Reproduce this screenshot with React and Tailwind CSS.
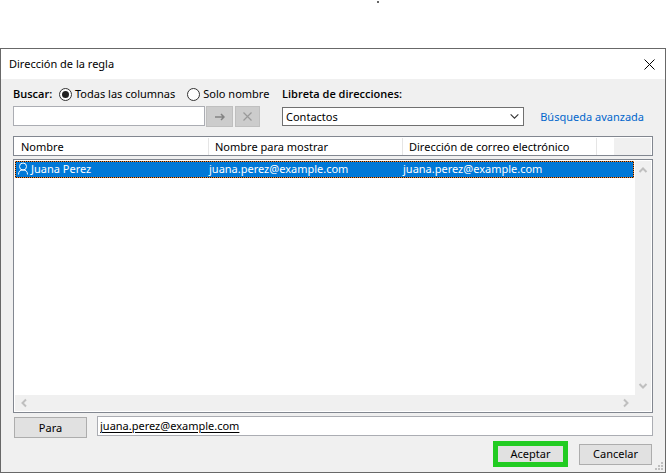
import React from "react";

const contacts = [
  { name: "Juana Perez", display: "juana.perez@example.com", email: "juana.perez@example.com" },
];

function Chevron({ className }) {
  return (
    <svg viewBox="0 0 10 10" className={className} fill="none" stroke="currentColor" aria-hidden="true">
      <path d="M1.500 7 5 3.500 8.500 7" />
    </svg>
  );
}

function PersonIcon() {
  return (
    <svg viewBox="0 0 12 13" className="h-[13px] w-3 shrink-0" fill="none" stroke="currentColor" aria-hidden="true">
      <circle cx="6" cy="4.500" r="3.500" />
      <path d="M1.500 12.500C1.500 9.500 3 8 6 8s4.500 1.500 4.500 4.500" />
    </svg>
  );
}

function Radio({ id, label, defaultChecked }) {
  return (
    <label htmlFor={id} className="flex items-center gap-[3px] whitespace-nowrap">
      <input
        id={id}
        type="radio"
        name="scope"
        defaultChecked={defaultChecked}
        className="grid size-[13px] appearance-none place-items-center rounded-full border border-[#333] bg-white before:size-[7px] before:rounded-full checked:before:bg-[#222]"
      />
      {label}
    </label>
  );
}

function ContactTable() {
  const cols = "grid grid-cols-[195px_194px_194px_1fr]";
  return (
    <div className="relative mt-[9px] flex flex-1 flex-col">
      <table className="flex flex-1 flex-col gap-[3px] text-left">
        <thead className="block h-5 border border-[#828790] bg-white">
          <tr className={cols + " h-full py-px"}>
            <th className="flex items-center border-r border-[#e5e5e5] pt-px pl-[7px] font-normal">Nombre</th>
            <th className="flex items-center border-r border-[#e5e5e5] pt-px pl-[6px] font-normal">Nombre para mostrar</th>
            <th className="flex items-center border-r border-[#e5e5e5] pt-px pl-[6px] font-normal whitespace-nowrap">
              Dirección de correo electrónico
            </th>
            <td className="mr-px ml-[17px] bg-[#f0f0f0]" />
          </tr>
        </thead>
        <tbody className="block flex-1 border border-[#828790] bg-white p-px">
          {contacts.map((c) => (
            <tr
              key={c.email}
              aria-selected="true"
              className={cols + " mr-[17px] h-[17px] items-center border border-dotted border-[#ff8728] bg-[#10181f] leading-[15px] text-white"}
            >
              <td className="flex h-[15px] items-center gap-[2px] bg-[#0078d7] pb-[2px] pl-px">
                <PersonIcon />
                {c.name}
              </td>
              <td className="-ml-[2px] h-[15px] bg-[#0078d7] leading-[13px]">{c.display}</td>
              <td className="-ml-[2px] h-[15px] bg-[#0078d7] leading-[13px]">{c.email}</td>
              <td className="h-[15px] bg-[#0078d7]" />
            </tr>
          ))}
        </tbody>
      </table>
      <div className="absolute top-[25px] right-[2px] bottom-[2px] flex w-4 flex-col items-center justify-between bg-[#f0f0f0] pt-1 pb-5 text-[#bfbfbf]">
        <Chevron className="size-[10px] stroke-2" />
        <Chevron className="size-[10px] rotate-180 stroke-2" />
      </div>
      <div className="absolute right-[18px] bottom-[2px] left-[2px] flex h-4 items-center justify-between bg-[#f0f0f0] px-1 text-[#bfbfbf]">
        <Chevron className="size-[10px] -rotate-90 stroke-2" />
        <Chevron className="size-[10px] rotate-90 stroke-2" />
      </div>
    </div>
  );
}

export default function App() {
  return (
    <div className="flex min-h-screen flex-col bg-white font-['Noto_Sans','Open_Sans',sans-serif] text-[11px] leading-4 text-black">
      <div className="flex h-12 justify-center pl-[90px]">
        <span className="mt-px size-[2px] rounded-full bg-[#333]" />
      </div>
      <main role="dialog" aria-labelledby="title" className="relative flex flex-1 flex-col border border-[#686868] bg-[#f0f0f0]">
        <header className="flex h-[30px] items-center justify-between bg-white pr-[10px] pl-2">
          <h1 id="title">Dirección de la regla</h1>
          <button type="button" aria-label="Cerrar">
            <svg viewBox="0 0 11 11" className="size-[11px]" stroke="#000" fill="none">
              <path d="M.5.5l10 10M10.500.5l-10 10" />
            </svg>
          </button>
        </header>
        <div className="flex flex-1 flex-col px-3 pb-[5px]">
          <div className="flex pt-1">
            <div className="w-[269px]">
              <div className="flex h-[23px] items-center pb-px">
                <label htmlFor="search" className="w-[46px] font-['Open_Sans',sans-serif] font-semibold">Buscar:</label>
                <Radio id="all" label="Todas las columnas" defaultChecked />
                <span className="w-3" />
                <Radio id="name" label="Solo nombre" />
              </div>
              <div className="flex">
                <input id="search" type="text" className="mr-px h-5 w-48 border border-[#abadb3] bg-white px-[2px]" />
                <button type="button" disabled aria-label="Buscar" className="mr-[2px] grid h-[21px] w-[27px] place-items-center border border-[#bfbfbf] bg-[#ccc] text-[#838383]">
                  <svg viewBox="0 0 10 8" className="h-2 w-[10px]" fill="none" stroke="currentColor" strokeWidth="1.500">
                    <path d="M0 4h9M6 1l3 3-3 3" />
                  </svg>
                </button>
                <button type="button" disabled aria-label="Borrar" className="grid h-[21px] w-[25px] place-items-center border border-[#bfbfbf] bg-[#ccc] text-[#999]">
                  <svg viewBox="0 0 9 9" className="size-[9px]" fill="none" stroke="currentColor" strokeWidth="1.200">
                    <path d="M.5.5l8 8M8.500.5l-8 8" />
                  </svg>
                </button>
              </div>
            </div>
            <div className="flex-1">
              <label htmlFor="book" className="flex h-[23px] items-center pb-px font-['Open_Sans',sans-serif] font-semibold">Libreta de direcciones:</label>
              <div className="flex items-center justify-between pt-px pr-[9px]">
                <div className="relative w-[242px]">
                  <select id="book" className="block h-[19px] w-full appearance-none border border-[#707070] bg-white pl-[3px] leading-4">
                    <option>Contactos</option>
                  </select>
                  <Chevron className="pointer-events-none absolute top-1 right-1 size-[11px] rotate-180 text-[#333]" />
                </div>
                <a href="#avanzada" className="whitespace-nowrap text-[#0066cc]">Búsqueda avanzada</a>
              </div>
            </div>
          </div>
          <ContactTable />
          <div className="mt-[3px] flex items-start gap-[10px]">
            <button type="button" className="mt-px ml-px h-[21px] w-[73px] border border-[#adadad] bg-[#e1e1e1]">Para</button>
            <input
              type="text"
              aria-label="Para"
              defaultValue="juana.perez@example.com"
              className="h-5 min-w-0 flex-1 border border-[#abadb3] bg-white px-[2px] pb-px underline underline-offset-2"
            />
          </div>
          <footer className="mt-[3px] flex items-center justify-end gap-[11px] pr-px">
            <button type="button" className="flex h-[26px] w-[75px] items-center justify-center border-5 border-[#22cc22] bg-[#e1e1e1]">Aceptar</button>
            <button type="button" className="h-[21px] w-[73px] border border-[#adadad] bg-[#e1e1e1]">Cancelar</button>
          </footer>
        </div>
        <svg viewBox="0 0 8 8" className="absolute right-[2px] bottom-[2px] size-2" fill="#bfbfbf" aria-hidden="true">
          <path d="M6 0h2v2H6zM3 3h2v2H3zM6 3h2v2H6zM0 6h2v2H0zM3 6h2v2H3zM6 6h2v2H6z" />
        </svg>
      </main>
    </div>
  );
}
